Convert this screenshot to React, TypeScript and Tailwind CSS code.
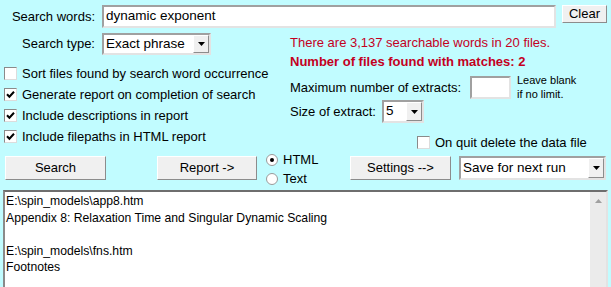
import React from "react";

// Windows-style search form, light cyan dialog
const sunken = "border-2 border-t-[#a0a0a0] border-l-[#a0a0a0] border-b-[#e3e3e3] border-r-[#e3e3e3] bg-white";
const raised = "border border-t-white border-l-white border-b-[#8c8c8c] border-r-[#8c8c8c] bg-[#f0f0f0]";

function Check({ checked }: { checked?: boolean }) {
  return (
    <div className="w-[13px] h-[13px] shrink-0 bg-white border border-t-[#8a8a8a] border-l-[#8a8a8a] border-b-[#dcdcdc] border-r-[#dcdcdc] flex items-center justify-center">
      {checked && (
        <svg width="9" height="9" viewBox="0 0 9 9">
          <path d="M1 4.3 L3.4 6.8 L8 1.8" stroke="#000" strokeWidth="2" fill="none" />
        </svg>
      )}
    </div>
  );
}

function Radio({ on }: { on?: boolean }) {
  return (
    <div className="w-[12px] h-[12px] shrink-0 rounded-full bg-white border border-[#9a9a9a] flex items-center justify-center">
      {on && <div className="w-[4px] h-[4px] rounded-full bg-black" />}
    </div>
  );
}

function Arrow() {
  return (
    <div className={`w-[16px] self-stretch flex items-center justify-center ${raised}`}>
      <svg width="7" height="4" viewBox="0 0 7 4">
        <path d="M0 0 H7 L3.5 4 Z" fill="#000" />
      </svg>
    </div>
  );
}

function Select({ value, className }: { value: string; className: string }) {
  return (
    <div className={`flex items-stretch ${sunken} ${className}`}>
      <div className="flex-1 flex items-center pl-[2px] text-[13.5px] whitespace-nowrap overflow-hidden">{value}</div>
      <Arrow />
    </div>
  );
}

function Btn({ label, className }: { label: string; className: string }) {
  return <div className={`flex items-center justify-center ${raised} ${className}`}>{label}</div>;
}

const CHECKS = [
  { label: "Sort files found by search word occurrence", checked: false },
  { label: "Generate report on completion of search", checked: true },
  { label: "Include descriptions in report", checked: true },
  { label: "Include filepaths in HTML report", checked: true },
];

export default function App() {
  return (
    <div className="w-[611px] h-[287px] overflow-hidden bg-[#c1fcff] font-['Liberation_Sans',Arial,sans-serif] text-[13px] text-black">
      <div className="flex items-start pt-[5px]">
        <div className="w-[95px] h-[23px] flex items-center justify-end">Search words:</div>
        <div className={`ml-[7px] w-[454px] h-[23px] flex items-center pl-[2px] text-[13.5px] ${sunken}`}>dynamic exponent</div>
        <Btn label="Clear" className="ml-[6px] w-[45px] h-[18px]" />
      </div>

      <div className="flex mt-[5px]">
        <div className="w-[290px]">
          <div className="flex items-center">
            <div className="w-[95px] text-right">Search type:</div>
            <Select value="Exact phrase" className="ml-[7px] w-[109px] h-[22px]" />
          </div>
          <div className="mt-[12px] ml-[4px] flex flex-col gap-[8px]">
            {CHECKS.map((c) => (
              <div key={c.label} className="h-[13px] flex items-center gap-[5px]">
                <Check checked={c.checked} />
                <span className="whitespace-nowrap">{c.label}</span>
              </div>
            ))}
          </div>
        </div>

        <div className="flex-1">
          <div className="h-[20px] flex items-center text-[#c4001e]">There are 3,137 searchable words in 20 files.</div>
          <div className="h-[18px] flex items-center font-bold text-[#c4001e]">Number of files found with matches: 2</div>
          <div className="mt-[5px] h-[23px] flex items-center">
            <span className="w-[180px]">Maximum number of extracts:</span>
            <div className={`w-[41px] h-[23px] ${sunken}`} />
            <div className="ml-[6px] text-[11px] leading-[14px] -mt-[2px]">
              <div>Leave blank</div>
              <div>if no limit.</div>
            </div>
          </div>
          <div className="mt-[1px] h-[23px] flex items-center">
            <span className="w-[92px]">Size of extract:</span>
            <Select value="5" className="w-[42px] h-[23px]" />
          </div>
          <div className="mt-[13px] ml-[127px] h-[13px] flex items-center gap-[5px]">
            <Check />
            <span className="whitespace-nowrap">On quit delete the data file</span>
          </div>
        </div>
      </div>

      <div className="flex items-start mt-[7px]">
        <Btn label="Search" className="ml-[5px] w-[101px] h-[24px]" />
        <Btn label="Report ->" className="ml-[51px] w-[100px] h-[24px]" />
        <div className="ml-[9px] w-[84px] -mt-[3px] flex flex-col gap-[6px]">
          <div className="h-[13px] flex items-center gap-[5px]">
            <Radio on />
            <span>HTML</span>
          </div>
          <div className="h-[13px] flex items-center gap-[5px]">
            <Radio />
            <span>Text</span>
          </div>
        </div>
        <Btn label="Settings -->" className="w-[101px] h-[24px]" />
        <Select value="Save for next run" className="ml-[8px] w-[147px] h-[24px]" />
      </div>

      <div className="mt-[5px] mx-[3px] h-[120px] flex border-2 border-t-[#6e6e6e] border-l-[#8a8a8a] border-r-[#e3e3e3] border-b-[#e3e3e3] bg-white">
        <div className="flex-1 pl-[1px] pt-[1px] text-[12.2px] leading-[16.5px]">
          <div>E:\spin_models\app8.htm</div>
          <div>Appendix 8: Relaxation Time and Singular Dynamic Scaling</div>
          <div>&nbsp;</div>
          <div>E:\spin_models\fns.htm</div>
          <div>Footnotes</div>
        </div>
        <div className="w-[16px] bg-[#ebebeb] flex justify-center pt-[7px]">
          <svg width="7" height="4" viewBox="0 0 7 4">
            <path d="M0 4 H7 L3.5 0 Z" fill="#a0a0a0" />
          </svg>
        </div>
      </div>
    </div>
  );
}
